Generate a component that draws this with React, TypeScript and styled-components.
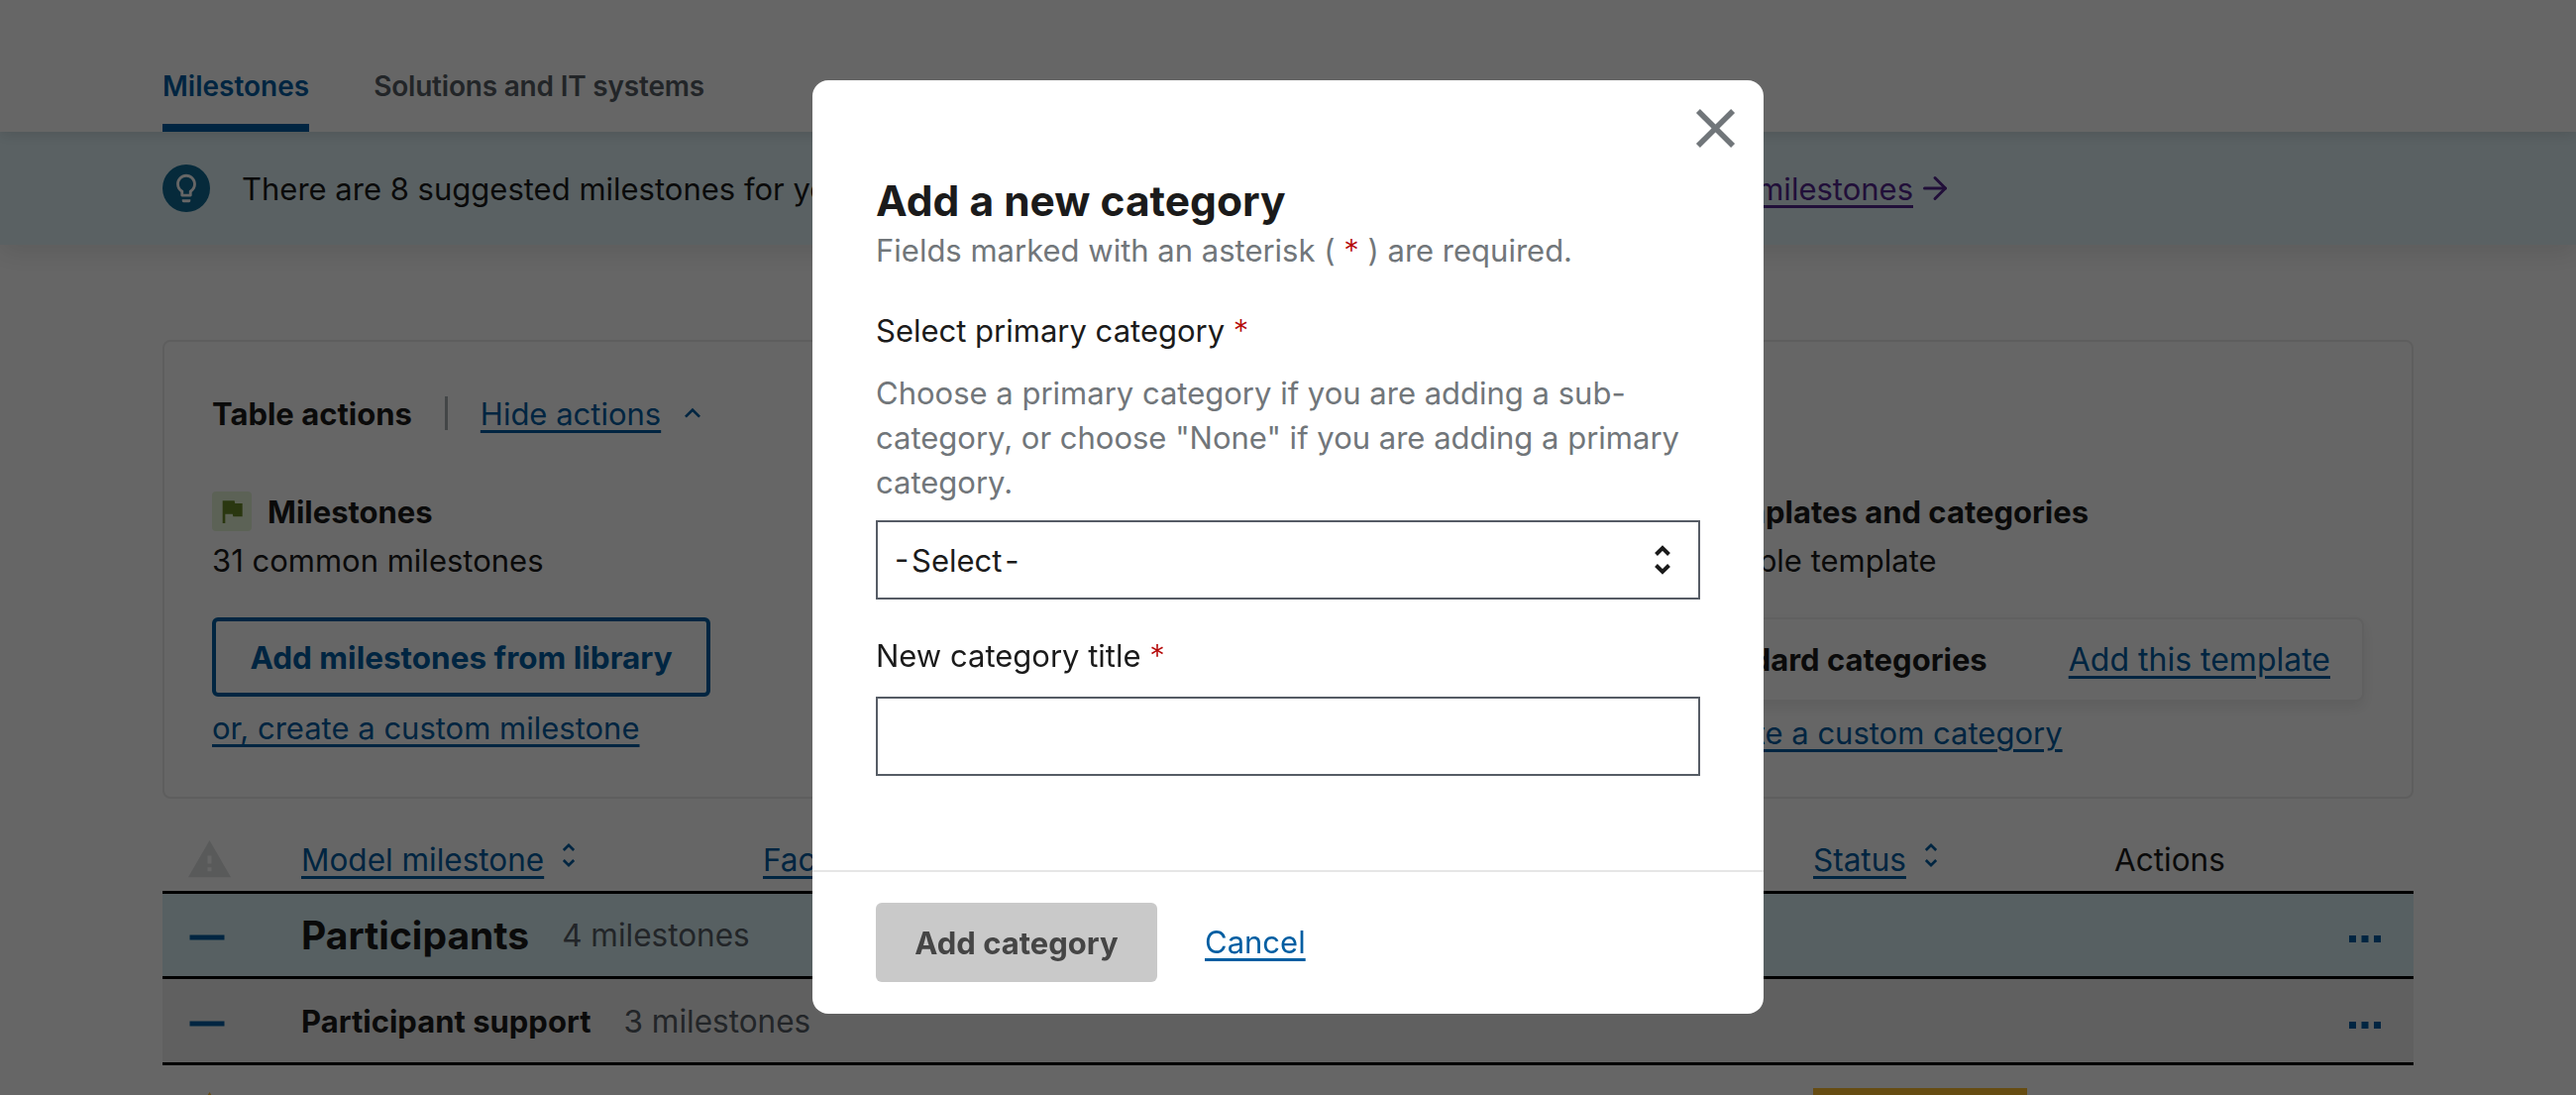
import React from "react";
import styled, { createGlobalStyle } from "styled-components";
import { ArrowRight } from "lucide-react";
import {
  MdClose,
  MdExpandLess,
  MdFlag,
  MdOutlineLightbulb,
  MdRemove,
  MdUnfoldMore,
  MdWarning,
} from "react-icons/md";

const GlobalStyle = createGlobalStyle`
  html, body {
    margin: 0;
    padding: 0;
    height: 1105px;
    overflow: hidden;
    background: #fff;
    color: #1b1b1b;
    font-family: "Inter", "Liberation Sans", sans-serif;
    font-size: 31px;
  }
  * { box-sizing: border-box; }
`;

const Page = styled.div`
  height: 1105px;
  overflow: hidden;
`;

const TabBar = styled.nav`
  position: relative;
  z-index: 2;
  height: 133px;
  padding: 0 164px;
  display: flex;
  align-items: flex-end;
  gap: 65px;
  background: #fff;
  box-shadow: 0 4px 12px rgba(0, 0, 0, 0.1);
`;

const Tab = styled.a<{ $active?: boolean }>`
  height: 100%;
  display: flex;
  align-items: center;
  padding-top: 48px;
  padding-bottom: ${({ $active }) => ($active ? "0" : "8px")};
  font-size: 28px;
  font-weight: 600;
  letter-spacing: ${({ $active }) => ($active ? "0" : "-0.2px")};
  color: ${({ $active }) => ($active ? "#005ea2" : "#565c65")};
  border-bottom: ${({ $active }) => ($active ? "8px solid #005ea2" : "0")};
`;

const Banner = styled.section`
  position: relative;
  z-index: 1;
  height: 114px;
  padding: 0 629px 0 164px;
  display: flex;
  align-items: center;
  background: #e1f3f8;
  box-shadow: 0 8px 24px rgba(0, 0, 0, 0.1);
`;

const BannerIcon = styled.span`
  flex: none;
  width: 48px;
  height: 48px;
  margin-right: 32px;
  border-radius: 50%;
  background: #0f6a94;
  color: #fff;
  display: grid;
  place-items: center;
  font-size: 34px;
`;

const BannerText = styled.span`
  white-space: nowrap;
`;

const VisitedLink = styled.a`
  margin-left: auto;
  color: #54278f;
  white-space: nowrap;
  display: inline-flex;
  align-items: center;
  gap: 4px;

  span {
    text-decoration: underline;
    text-underline-offset: 5px;
  }
`;

const Main = styled.main`
  padding: 96px 164px 0;
`;

const ActionsCard = styled.section`
  height: 463px;
  padding: 47px 48px 0;
  border: 2px solid #ebebeb;
  border-radius: 8px;
`;

const ActionsHeader = styled.div`
  display: flex;
  align-items: center;
  height: 50px;
`;

const ActionsTitle = styled.strong`
  font-weight: 700;
`;

const Separator = styled.span`
  width: 3px;
  height: 34px;
  margin: 0 33px;
  background: #a9aeb1;
`;

const Link = styled.a`
  color: #005ea2;
  font-weight: 400;
  text-decoration: underline;
  text-underline-offset: 5px;
  white-space: nowrap;
`;

const TemplateLink = styled(Link)`
  font-size: 32px;
`;

const Chevron = styled.span`
  display: inline-flex;
  margin-left: 16px;
  color: #005ea2;
  font-size: 32px;
`;

const ActionColumns = styled.div`
  display: flex;
  justify-content: space-between;
  margin-top: 54px;
`;

const ActionColumn = styled.div`
  width: 503px;
`;

const RightColumn = styled.div`
  width: 725px;
`;

const ColumnTitle = styled.div`
  display: flex;
  align-items: center;
  gap: 16px;
  height: 40px;
  font-weight: 700;
  white-space: nowrap;
`;

const FlagBox = styled.span<{ $tone: string }>`
  flex: none;
  width: 40px;
  height: 40px;
  border-radius: 4px;
  background: ${({ $tone }) => $tone};
  color: #6a8a28;
  display: grid;
  place-items: center;
  font-size: 32px;
`;

const ColumnText = styled.div`
  margin-top: 8px;
  height: 44px;
  line-height: 44px;
  white-space: nowrap;
`;

const TemplateCount = styled(ColumnText)`
  padding-left: 8px;
`;

const OutlineButton = styled.button`
  width: 503px;
  height: 80px;
  margin-top: 35px;
  display: block;
  background: #fff;
  border: 4px solid #005ea2;
  border-radius: 6px;
  color: #005ea2;
  font: 700 31.5px "Inter", sans-serif;
  white-space: nowrap;
`;

const BelowLink = styled(Link)`
  display: block;
  margin-top: 12px;
  line-height: 40px;
`;

const TemplateBox = styled.div`
  height: 85px;
  margin-top: 35px;
  padding: 0 32px 0 34px;
  display: flex;
  align-items: center;
  justify-content: flex-end;
  gap: 82px;
  background: #fff;
  border: 2px solid #f0f0f0;
  border-radius: 8px;
  box-shadow: 0 6px 14px rgba(0, 0, 0, 0.08);
  font-weight: 700;
`;

const Table = styled.div`
  margin-top: 36px;
`;

const HeaderRow = styled.div`
  display: grid;
  grid-template-columns: 114px 466px 1060px 304px 1fr;
  align-items: center;
  height: 60px;
  padding: 0 0 6px 26px;
  border-bottom: 3px solid #000;
  font-size: 31.5px;
`;

const HeaderCell = styled.span`
  display: flex;
  align-items: center;
  gap: 9px;
  white-space: nowrap;
`;

const SortIcon = styled.span`
  display: inline-flex;
  margin-top: -10px;
  color: #005ea2;
  font-size: 32px;
`;

const WarnIcon = styled.span<{ $tone: string }>`
  display: inline-flex;
  margin-left: -2px;
  color: ${({ $tone }) => $tone};
  font-size: 47px;
`;

const GroupRow = styled.div<{ $height: number; $tone: string }>`
  height: ${({ $height }) => $height}px;
  display: flex;
  align-items: center;
  padding: 0 33px 0 15px;
  background: ${({ $tone }) => $tone};
  border-bottom: 3px solid #000;
`;

const Toggle = styled.span`
  width: 125px;
  flex: none;
  margin-top: 5px;
  display: inline-flex;
  color: #005ea2;
  font-size: 60px;
`;

const GroupTitle = styled.span<{ $size: number }>`
  font-weight: 700;
  font-size: ${({ $size }) => $size}px;
  white-space: nowrap;
`;

const GroupCount = styled.span`
  margin-left: 33px;
  font-size: 31.5px;
  color: #565c65;
  white-space: nowrap;
`;

const MoreDots = styled.svg`
  width: 32px;
  height: 7px;
  margin: 8px 0 0 auto;
  fill: #005ea2;
`;

const StatusRow = styled.div`
  display: grid;
  grid-template-columns: 1640px 216px;
  height: 60px;
  padding: 23px 0 0 26px;
`;

const StatusTag = styled.span`
  display: block;
  height: 40px;
  background: #ffbe2e;
`;

const Overlay = styled.div`
  position: fixed;
  inset: 0;
  z-index: 10;
  padding-bottom: 1px;
  display: flex;
  align-items: center;
  justify-content: center;
  background: rgba(0, 0, 0, 0.6);
`;

const Modal = styled.div`
  position: relative;
  width: 960px;
  height: 942px;
  display: flex;
  flex-direction: column;
  background: #fff;
  border-radius: 16px;
`;

const CloseButton = styled.span`
  position: absolute;
  top: 15px;
  right: 15px;
  display: inline-flex;
  color: #71767a;
  font-size: 67px;
`;

const ModalBody = styled.div`
  flex: 1;
  padding: 92px 64px 0;
`;

const ModalTitle = styled.h2`
  margin: 0;
  font-size: 42.5px;
  line-height: 60px;
  font-weight: 700;
`;

const Hint = styled.p`
  margin: 0;
  color: #71767a;
  line-height: 40px;
`;

const Required = styled.span`
  color: #b50909;
  font-weight: 300;
`;

const Label = styled.label<{ $top: number }>`
  display: block;
  margin-top: ${({ $top }) => $top}px;
  line-height: 44px;
`;

const Description = styled.p`
  margin: 18px 0 0;
  color: #71767a;
  line-height: 45px;
`;

const SelectBox = styled.div`
  height: 80px;
  margin-top: 16px;
  padding: 0 26px 0 17px;
  display: flex;
  align-items: center;
  justify-content: space-between;
  border: 2px solid #565c65;
`;

const SelectArrows = styled.svg`
  width: 20px;
  height: 32px;
`;

const TextInput = styled.div`
  height: 80px;
  margin-top: 19px;
  border: 2px solid #565c65;
`;

const ModalFooter = styled.div`
  height: 145px;
  padding: 31px 64px 0;
  display: flex;
  align-items: flex-start;
  gap: 48px;
  border-top: 2px solid #e6e6e6;
`;

const DisabledButton = styled.button`
  width: 284px;
  height: 80px;
  border: 0;
  border-radius: 6px;
  background: #c9c9c9;
  color: #454545;
  font: 700 31px "Inter", sans-serif;
  white-space: nowrap;
`;

const CancelLink = styled(Link)`
  line-height: 80px;
`;

const More: React.FC = () => (
  <MoreDots viewBox="0 0 32 7">
    <rect x="0" width="7" height="7" />
    <rect x="12.5" width="7" height="7" />
    <rect x="25" width="7" height="7" />
  </MoreDots>
);

const App: React.FC = () => (
  <>
    <GlobalStyle />
    <Page>
      <TabBar>
        <Tab $active>Milestones</Tab>
        <Tab>Solutions and IT systems</Tab>
      </TabBar>
      <Banner>
        <BannerIcon><MdOutlineLightbulb /></BannerIcon>
        <BannerText>There are 8 suggested milestones for your model.</BannerText>
        <VisitedLink><span>Review suggested milestones</span> <ArrowRight size={36} /></VisitedLink>
      </Banner>
      <Main>
        <ActionsCard>
          <ActionsHeader>
            <ActionsTitle>Table actions</ActionsTitle>
            <Separator />
            <Link>Hide actions</Link>
            <Chevron><MdExpandLess /></Chevron>
          </ActionsHeader>
          <ActionColumns>
            <ActionColumn>
              <ColumnTitle>
                <FlagBox $tone="#e7f4d7"><MdFlag /></FlagBox>
                Milestones
              </ColumnTitle>
              <ColumnText>31 common milestones</ColumnText>
              <OutlineButton>Add milestones from library</OutlineButton>
              <BelowLink>or, create a custom milestone</BelowLink>
            </ActionColumn>
            <RightColumn>
              <ColumnTitle>
                <FlagBox $tone="#e7f4d7"><MdFlag /></FlagBox>
                Templates and categories
              </ColumnTitle>
              <TemplateCount>1 available template</TemplateCount>
              <TemplateBox>
                Standard categories
                <TemplateLink>Add this template</TemplateLink>
              </TemplateBox>
              <BelowLink>or, create a custom category</BelowLink>
            </RightColumn>
          </ActionColumns>
        </ActionsCard>
        <Table>
          <HeaderRow>
            <WarnIcon $tone="#dfe1e2"><MdWarning /></WarnIcon>
            <HeaderCell><Link>Model milestone</Link><SortIcon><MdUnfoldMore /></SortIcon></HeaderCell>
            <HeaderCell><Link>Facilitator</Link></HeaderCell>
            <HeaderCell><Link>Status</Link><SortIcon><MdUnfoldMore /></SortIcon></HeaderCell>
            <HeaderCell>Actions</HeaderCell>
          </HeaderRow>
          <GroupRow $height={86} $tone="#d9f0f5">
            <Toggle><MdRemove /></Toggle>
            <GroupTitle $size={39}>Participants</GroupTitle>
            <GroupCount>4 milestones</GroupCount>
            <More />
          </GroupRow>
          <GroupRow $height={87} $tone="#f0f0f0">
            <Toggle><MdRemove /></Toggle>
            <GroupTitle $size={31}>Participant support</GroupTitle>
            <GroupCount>3 milestones</GroupCount>
            <More />
          </GroupRow>
          <StatusRow>
            <WarnIcon $tone="#ffbe2e"><MdWarning /></WarnIcon>
            <StatusTag />
          </StatusRow>
        </Table>
      </Main>
    </Page>
    <Overlay>
      <Modal>
        <CloseButton><MdClose /></CloseButton>
        <ModalBody>
          <ModalTitle>Add a new category</ModalTitle>
          <Hint>Fields marked with an asterisk ( <Required>*</Required> ) are required.</Hint>
          <Label $top={39}>Select primary category <Required>*</Required></Label>
          <Description>
            Choose a primary category if you are adding a sub-category, or choose "None" if you are adding a primary category.
          </Description>
          <SelectBox>
            <span>-&#8202;Select&#8202;-</span>
            <SelectArrows viewBox="0 0 20 32" fill="none" stroke="#1b1b1b" strokeWidth="4">
              <path d="M3.5 10.5L10 4l6.5 6.5M3.5 21.5L10 28l6.5-6.5" />
            </SelectArrows>
          </SelectBox>
          <Label $top={35}>New category title <Required>*</Required></Label>
          <TextInput />
        </ModalBody>
        <ModalFooter>
          <DisabledButton>Add category</DisabledButton>
          <CancelLink>Cancel</CancelLink>
        </ModalFooter>
      </Modal>
    </Overlay>
  </>
);

export default App;
